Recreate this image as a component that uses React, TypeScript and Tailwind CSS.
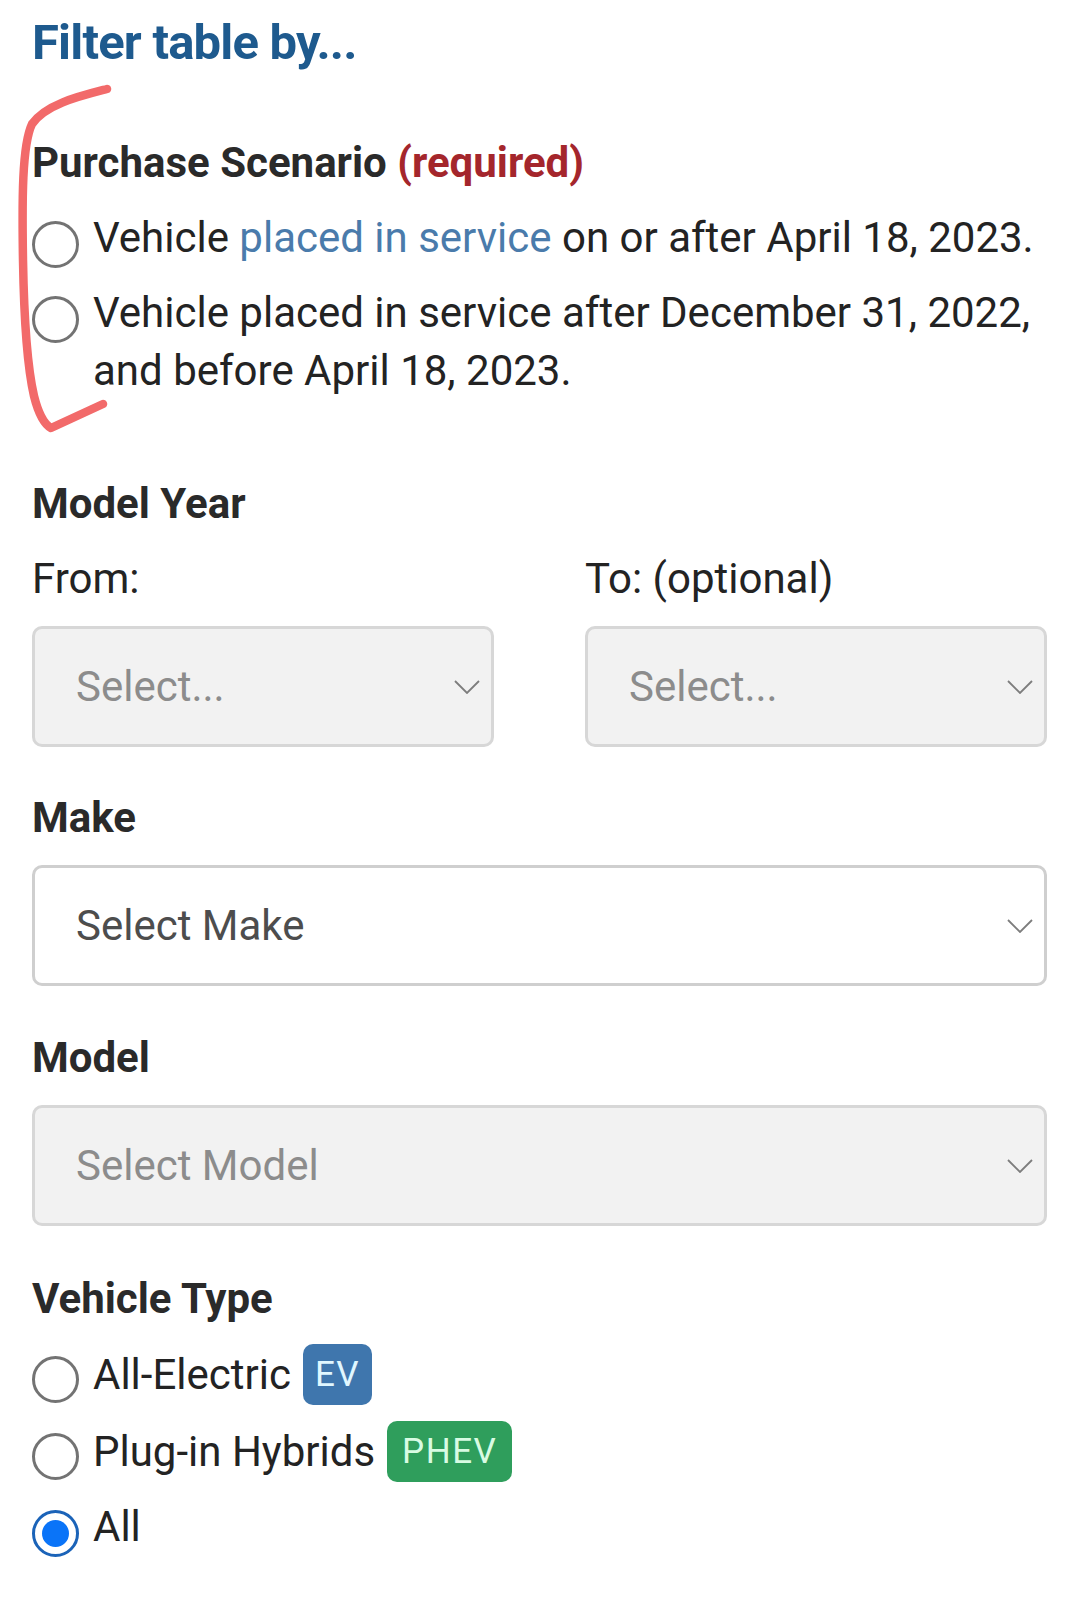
import React from "react";

const Chevron = () => (
  <svg width="26" height="14" viewBox="0 0 26 14" fill="none" className="shrink-0">
    <polyline points="1,1 13,13 25,1" stroke="#7d7d7d" strokeWidth="1.8" />
  </svg>
);

const Radio = ({ checked = false }: { checked?: boolean }) =>
  checked ? (
    <span className="mt-[12px] shrink-0 w-[47px] h-[47px] rounded-full border-[3px] border-[#1b63b8] bg-white flex items-center justify-center">
      <span className="w-[27px] h-[27px] rounded-full bg-[#0a74f8]" />
    </span>
  ) : (
    <span className="mt-[12px] shrink-0 w-[47px] h-[47px] rounded-full border-[3px] border-[#737373] bg-white" />
  );

const SelectBox = ({
  placeholder,
  disabled = true,
}: {
  placeholder: string;
  disabled?: boolean;
}) => (
  <div
    className={`h-[121px] rounded-[10px] border-[3px] pl-[41px] pr-[11px] flex items-center justify-between ${
      disabled
        ? "bg-[#f2f2f2] border-[#d7d7d7] text-[#8c8c8c]"
        : "bg-white border-[#cfcfcf] text-[#4d4d4d]"
    }`}
  >
    <span className="text-[42px] leading-none">{placeholder}</span>
    <Chevron />
  </div>
);

const Heading = ({ children }: { children: React.ReactNode }) => (
  <h3 className="text-[42px] leading-[58px] font-bold text-[#2a2a2a]">{children}</h3>
);

export default function App() {
  return (
    <div className="relative min-h-screen bg-white font-['Roboto',sans-serif] text-[#232323] pl-[32px] pr-[33px] pt-[13px] pb-[40px]">
      <h2 className="text-[49px] leading-[60px] font-bold text-[#1e5a8e] tracking-[-0.8px]">
        Filter table by...
      </h2>

      {/* Purchase scenario */}
      <section className="mt-[61px]">
        <Heading>
          Purchase Scenario <span className="text-[#a4262c]">(required)</span>
        </Heading>
        <div className="mt-[17px] flex flex-col gap-[16px] text-[42px] leading-[58px]">
          <label className="flex items-start gap-[14px]">
            <Radio />
            <span className="whitespace-nowrap">
              Vehicle <span className="text-[#4a7bab]">placed in service</span> on or after
              April 18, 2023.
            </span>
          </label>
          <label className="flex items-start gap-[14px]">
            <Radio />
            <span>
              Vehicle placed in service after December 31, 2022, and before April 18, 2023.
            </span>
          </label>
        </div>
      </section>

      {/* Model year */}
      <section className="mt-[75px]">
        <Heading>Model Year</Heading>
        <div className="mt-[17px] grid grid-cols-2 gap-x-[91px]">
          <div>
            <div className="text-[42px] leading-[58px]">From:</div>
            <div className="mt-[18px]">
              <SelectBox placeholder="Select..." />
            </div>
          </div>
          <div>
            <div className="text-[42px] leading-[58px]">To: (optional)</div>
            <div className="mt-[18px]">
              <SelectBox placeholder="Select..." />
            </div>
          </div>
        </div>
      </section>

      <section className="mt-[42px]">
        <Heading>Make</Heading>
        <div className="mt-[18px]">
          <SelectBox placeholder="Select Make" disabled={false} />
        </div>
      </section>

      <section className="mt-[43px]">
        <Heading>Model</Heading>
        <div className="mt-[18px]">
          <SelectBox placeholder="Select Model" />
        </div>
      </section>

      {/* Vehicle type */}
      <section className="mt-[44px]">
        <Heading>Vehicle Type</Heading>
        <div className="mt-[16px] flex flex-col gap-[16px] text-[42px] leading-[58px]">
          <label className="flex items-start gap-[14px]">
            <Radio />
            <span className="flex items-center gap-[12px]">
              All-Electric
              <span className="h-[61px] px-[12px] rounded-[10px] bg-[#3f76ad] text-[#e0f7ff] text-[35px] leading-none tracking-[1.5px] flex items-center">
                EV
              </span>
            </span>
          </label>
          <label className="flex items-start gap-[14px]">
            <Radio />
            <span className="flex items-center gap-[12px]">
              Plug-in Hybrids
              <span className="h-[61px] px-[15px] rounded-[10px] bg-[#2f9e5c] text-[#d8fbe3] text-[35px] leading-none tracking-[1.5px] flex items-center">
                PHEV
              </span>
            </span>
          </label>
          <label className="flex items-start gap-[14px]">
            <Radio checked />
            <span>All</span>
          </label>
        </div>
      </section>

      {/* hand-drawn annotation */}
      <svg
        className="absolute left-0 top-0 pointer-events-none"
        width="140"
        height="450"
        viewBox="0 0 140 450"
        fill="none"
      >
        <path
          d="M107 89 C 80 96, 46 104, 32 124 C 22 145, 22 200, 23 260 C 24 320, 28 370, 34 396 C 38 412, 44 424, 51 428 L 103 404"
          stroke="#f26a6a"
          strokeWidth="8.5"
          strokeLinecap="round"
          strokeLinejoin="round"
        />
      </svg>
    </div>
  );
}
